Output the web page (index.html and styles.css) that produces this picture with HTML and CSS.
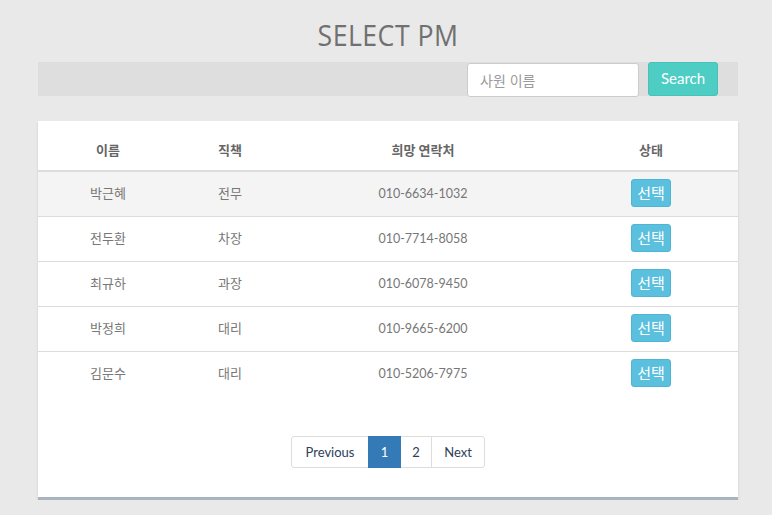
FILE: index.html
```html
<!DOCTYPE html>
<html lang="ko">
<head>
<meta charset="utf-8">
<title>Select PM</title>
<link rel="stylesheet" href="styles.css">
</head>
<body>
<div class="page">
  <h1 class="title">SELECT PM</h1>
  <div class="searchbar">
    <input class="search-input" type="text" placeholder="사원 이름">
    <button class="search-btn">Search</button>
  </div>
  <div class="card">
    <table class="pm-table">
      <colgroup>
        <col class="c1"><col class="c2"><col class="c3"><col class="c4">
      </colgroup>
      <thead>
        <tr><th>이름</th><th>직책</th><th>희망 연락처</th><th>상태</th></tr>
      </thead>
      <tbody>
        <tr class="hl"><td>박근혜</td><td>전무</td><td class="phone">010-6634-1032</td><td><button class="pick">선택</button></td></tr>
        <tr><td>전두환</td><td>차장</td><td class="phone">010-7714-8058</td><td><button class="pick">선택</button></td></tr>
        <tr><td>최규하</td><td>과장</td><td class="phone">010-6078-9450</td><td><button class="pick">선택</button></td></tr>
        <tr><td>박정희</td><td>대리</td><td class="phone">010-9665-6200</td><td><button class="pick">선택</button></td></tr>
        <tr><td>김문수</td><td>대리</td><td class="phone">010-5206-7975</td><td><button class="pick">선택</button></td></tr>
      </tbody>
    </table>
    <nav class="pager">
      <a class="pg first">Previous</a>
      <a class="pg active">1</a>
      <a class="pg num">2</a>
      <a class="pg last">Next</a>
    </nav>
  </div>
</div>
</body>
</html>
```
FILE: styles.css
```css
html, body {
  margin: 0;
  padding: 0;
  background: #e9e9e9;
  font-family: "Lato", "Noto Sans CJK KR", sans-serif;
}
body {
  padding-left: 4px;
}
.page {
  width: 700px;
  margin: 0 auto;
  padding-top: 17px;
}
.title {
  margin: 0;
  text-align: center;
  font-family: "Open Sans", "Noto Sans", sans-serif;
  font-weight: 400;
  font-size: 29px;
  line-height: 36px;
  color: #707070;
  letter-spacing: 0.5px;
  transform: scaleX(0.92);
}
.searchbar {
  margin-top: 9px;
  height: 34px;
  background: #dedede;
  display: flex;
  justify-content: flex-end;
  align-items: flex-start;
  padding-right: 20px;
  gap: 9px;
}
.search-input {
  box-sizing: border-box;
  width: 172px;
  height: 34px;
  margin-top: 1px;
  border: 1px solid #cccccc;
  border-radius: 3px;
  background: #fff;
  padding: 0 12px;
  font-family: "Noto Sans CJK KR", sans-serif;
  font-size: 14px;
  color: #555;
  outline: none;
}
.search-input::placeholder { color: #9a9a9a; }
.search-btn {
  box-sizing: border-box;
  width: 70px;
  height: 34px;
  border: 1px solid #47c2b9;
  border-radius: 3px;
  background: #4ecdc4;
  color: #fff;
  font-family: "Lato", sans-serif;
  font-size: 15px;
  line-height: 30px;
  padding: 0 0 2px;
}
.card {
  margin-top: 25px;
  background: #fff;
  padding: 10px 0 29px;
  border-bottom: 3px solid #aab3be;
  box-shadow: 0 2px 2px rgba(120,130,145,0.3);
}
.pm-table {
  width: 100%;
  border-collapse: collapse;
  table-layout: fixed;
  font-size: 13px;
  color: #777;
}
.c1 { width: 140px; }
.c2 { width: 104px; }
.c3 { width: 282px; }
.c4 { width: 174px; }
.pm-table th {
  height: 37px;
  padding: 0 0 2px;
  text-align: center;
  font-weight: 700;
  color: #666;
  font-size: 13px;
  border-bottom: 2px solid #dddddd;
  vertical-align: middle;
}
.pm-table td {
  height: 41px;
  padding: 0 0 3px;
  text-align: center;
  vertical-align: middle;
  border-top: 1px solid #dddddd;
}
.pm-table td.phone {
  font-size: 12.5px;
  padding-bottom: 1px;
  height: 43px;
}
.pm-table tbody tr:first-child td { border-top: none; }
.pm-table tr.hl td { background: #f4f4f4; }
.pick {
  box-sizing: border-box;
  width: 40px;
  height: 28px;
  padding: 0;
  border: 1px solid #4fb5d4;
  border-radius: 3px;
  background: #5bc0de;
  color: #fff;
  font-family: "Noto Sans CJK KR", sans-serif;
  font-size: 15px;
  line-height: 24px;
  margin-left: 0;
}
.pager {
  display: flex;
  justify-content: center;
  margin-top: 40px;
}
.pg {
  box-sizing: border-box;
  height: 32px;
  line-height: 30px;
  padding: 0;
  text-align: center;
  border: 1px solid #dddddd;
  margin-left: -1px;
  background: #fff;
  color: #2d3e58;
  font-size: 13px;
}
.pg.first { border-radius: 3px 0 0 3px; width: 78px; margin-left: 0; }
.pg.num { width: 32px; }
.pg.last { border-radius: 0 3px 3px 0; width: 54px; }
.pg.active {
  background: #337ab7;
  border-color: #337ab7;
  color: #fff;
  width: 33px;
  position: relative;
  z-index: 1;
}
```
